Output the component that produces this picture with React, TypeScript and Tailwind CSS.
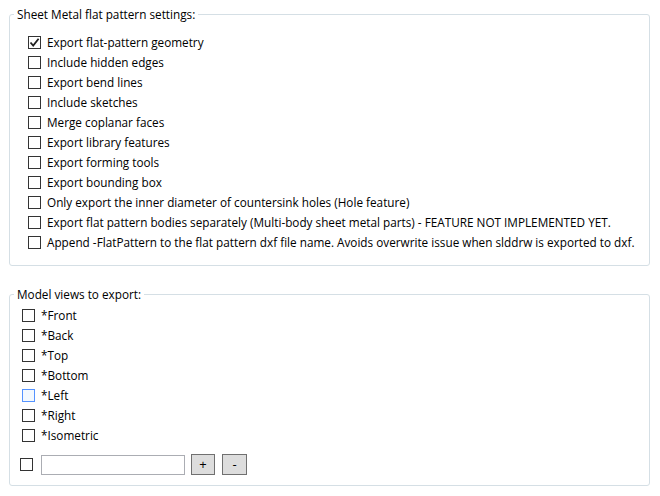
import React from 'react'

const flatOptions = [
  { label: 'Export flat-pattern geometry', checked: true },
  { label: 'Include hidden edges' },
  { label: 'Export bend lines' },
  { label: 'Include sketches' },
  { label: 'Merge coplanar faces' },
  { label: 'Export library features' },
  { label: 'Export forming tools' },
  { label: 'Export bounding box' },
  { label: 'Only export the inner diameter of countersink holes (Hole feature)' },
  { label: 'Export flat pattern bodies separately (Multi-body sheet metal parts) - FEATURE NOT IMPLEMENTED YET.' },
  { label: 'Append -FlatPattern to the flat pattern dxf file name. Avoids overwrite issue when slddrw is exported to dxf.' },
]

const views = ['*Front', '*Back', '*Top', '*Bottom', '*Left', '*Right', '*Isometric']

const CheckBox: React.FC<{ checked?: boolean; hover?: boolean }> = ({ checked, hover }) => (
  <span
    className={`flex h-[13px] w-[13px] shrink-0 items-center justify-center border ${
      hover ? 'border-[#5593ff] bg-[#f3f9ff]' : 'border-[#333333] bg-white'
    }`}
  >
    {checked && (
      <svg width="11" height="11" viewBox="0 0 11 11">
        <path d="M1.5 5.5 L4.2 8.6 L9.6 1.8" fill="none" stroke="#212121" strokeWidth="1.8" />
      </svg>
    )}
  </span>
)

export default function App() {
  return (
    <div
      className="h-[496px] w-[660px] overflow-hidden bg-white text-[11.75px] leading-[16px] text-black"
      style={{ fontFamily: '"Open Sans", "Noto Sans", sans-serif' }}
    >
      {/* Sheet metal settings */}
      <fieldset className="mt-[6px] ml-[9px] h-[260px] w-[641px] rounded-[3px] border border-[#d5dfe5] px-0 pt-[10px] pb-0">
        <legend className="ml-[4px] px-[3px]">Sheet Metal flat pattern settings:</legend>
        <div className="flex flex-col pl-[18px]">
          {flatOptions.map((o) => (
            <label key={o.label} className="flex h-[20px] items-center gap-[6px] whitespace-nowrap">
              <CheckBox checked={o.checked} />
              <span>{o.label}</span>
            </label>
          ))}
        </div>
      </fieldset>

      {/* Model views */}
      <fieldset className="mt-[20px] ml-[9px] h-[200px] w-[641px] rounded-[3px] border border-[#d5dfe5] px-0 pt-[3px] pb-0">
        <legend className="ml-[4px] px-[3px]">Model views to export:</legend>
        <div className="flex flex-col pl-[12px]">
          {views.map((v) => (
            <label key={v} className="flex h-[20px] items-center gap-[6px]">
              <CheckBox hover={v === '*Left'} />
              <span>{v}</span>
            </label>
          ))}
        </div>
        <div className="mt-[9px] flex h-[21px] items-center pl-[10px]">
          <CheckBox />
          <input className="ml-[8px] h-[20px] w-[144px] border border-[#abadb3] bg-white px-1 outline-none" />
          <button className="ml-[6px] h-[21px] w-[24px] border border-[#707070] bg-[#dddddd] text-[13px] leading-none">+</button>
          <button className="ml-[7px] h-[21px] w-[25px] border border-[#707070] bg-[#dddddd] text-[13px] leading-none">-</button>
        </div>
      </fieldset>
    </div>
  )
}
